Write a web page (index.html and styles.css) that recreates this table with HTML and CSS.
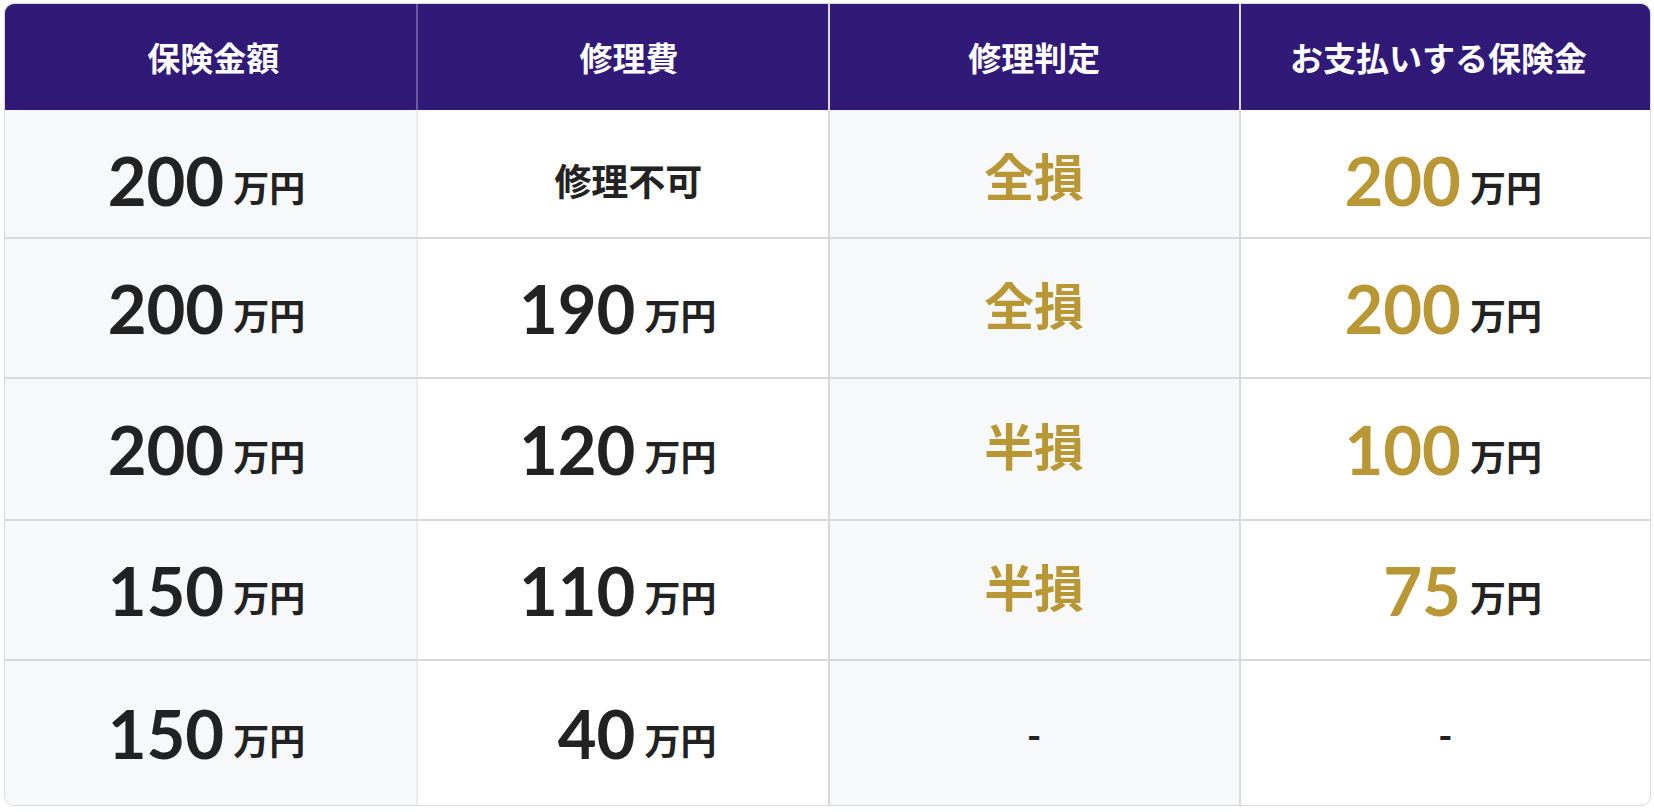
FILE: index.html
```html
<!DOCTYPE html>
<html lang="ja">
<head>
<meta charset="utf-8">
<title>保険金額表</title>
<link rel="stylesheet" href="styles.css">
</head>
<body>
<div class="table">
  <div class="row head">
    <div class="cell th th-1">保険金額</div>
    <div class="cell th th-2">修理費</div>
    <div class="cell th th-3">修理判定</div>
    <div class="cell th th-4">お支払いする保険金</div>
  </div>
  <div class="row r1">
    <div class="cell amt"><span class="val"><span class="num">200</span><span class="unit">万円</span></span></div>
    <div class="cell mid"><span class="label">修理不可</span></div>
    <div class="cell mid"><span class="judge">全損</span></div>
    <div class="cell amt"><span class="val"><span class="num gold">200</span><span class="unit">万円</span></span></div>
  </div>
  <div class="row r2">
    <div class="cell amt"><span class="val"><span class="num">200</span><span class="unit">万円</span></span></div>
    <div class="cell amt"><span class="val"><span class="num">190</span><span class="unit">万円</span></span></div>
    <div class="cell mid"><span class="judge">全損</span></div>
    <div class="cell amt"><span class="val"><span class="num gold">200</span><span class="unit">万円</span></span></div>
  </div>
  <div class="row r3">
    <div class="cell amt"><span class="val"><span class="num">200</span><span class="unit">万円</span></span></div>
    <div class="cell amt"><span class="val"><span class="num">120</span><span class="unit">万円</span></span></div>
    <div class="cell mid"><span class="judge">半損</span></div>
    <div class="cell amt"><span class="val"><span class="num gold">100</span><span class="unit">万円</span></span></div>
  </div>
  <div class="row r4">
    <div class="cell amt"><span class="val"><span class="num">150</span><span class="unit">万円</span></span></div>
    <div class="cell amt"><span class="val"><span class="num">110</span><span class="unit">万円</span></span></div>
    <div class="cell mid"><span class="judge">半損</span></div>
    <div class="cell amt"><span class="val"><span class="num gold">75</span><span class="unit">万円</span></span></div>
  </div>
  <div class="row r5">
    <div class="cell amt"><span class="val"><span class="num">150</span><span class="unit">万円</span></span></div>
    <div class="cell amt"><span class="val"><span class="num">40</span><span class="unit">万円</span></span></div>
    <div class="cell mid"><span class="dash">-</span></div>
    <div class="cell mid"><span class="dash">-</span></div>
  </div>
</div>
</body>
</html>
```

FILE: styles.css
```css
* {
  box-sizing: border-box;
}

html, body {
  margin: 0;
  padding: 0;
  background: #ffffff;
}

body {
  padding: 3px 3px 0 4px;
  font-family: "Noto Sans CJK JP", "Noto Sans", sans-serif;
  color: #222222;
}

.table {
  border: 1px solid #d9d9dd;
  border-radius: 10px;
  overflow: hidden;
  background: #ffffff;
}

.row {
  display: grid;
  grid-template-columns: repeat(4, 1fr);
}

.head {
  height: 106px;
  background: #311a77;
}

.r1 { height: 127px; }
.r2 { height: 140px; border-top: 2px solid #d9d9dc; }
.r3 { height: 142px; border-top: 2px solid #d9d9dc; }
.r4 { height: 140px; border-top: 2px solid #d9d9dc; }
.r5 { height: 146px; border-top: 2px solid #d9d9dc; }

.r1 .cell {
  padding-top: 12px;
}

.cell {
  display: flex;
  align-items: center;
  justify-content: center;
  min-width: 0;
}

.cell + .cell {
  border-left: 2px solid #d9d9dc;
}

.row:not(.head) .cell:nth-child(2) {
  border-left-color: #ececef;
}

.row:not(.head) .cell:nth-child(odd) {
  background: #f7f8fa;
}

.head .cell:nth-child(2) {
  border-left-color: rgba(255, 255, 255, 0.28);
}

.th {
  color: #ffffff;
  font-weight: 700;
  font-size: 33px;
  font-family: "Noto Sans CJK JP", "Noto Sans", sans-serif;
  white-space: nowrap;
}

.th-1 { padding-left: 5px; }
.th-2 { padding-left: 12px; }
.th-4 { padding-right: 14px; }

.amt {
  justify-content: flex-end;
  padding-right: 111px;
}

.amt:nth-child(4) {
  padding-right: 108px;
}

.val {
  display: block;
  white-space: nowrap;
  font-family: "Lato", "Liberation Sans", sans-serif;
  font-weight: 700;
  font-size: 67px;
}

.num {
  font-family: "Lato", "Liberation Sans", sans-serif;
  font-weight: 700;
  font-size: 67px;
  color: #222222;
}

.num.gold {
  color: #b99734;
}

.unit {
  font-family: "Noto Sans CJK JP", "Noto Sans", sans-serif;
  font-weight: 700;
  font-size: 36px;
  color: #222222;
  margin-left: 9px;
  vertical-align: 4px;
}

.label {
  font-family: "Noto Sans CJK JP", "Noto Sans", sans-serif;
  font-weight: 700;
  font-size: 37px;
  color: #222222;
  margin-left: 11px;
}

.judge {
  font-family: "Noto Sans CJK JP", "Noto Sans", sans-serif;
  font-weight: 700;
  font-size: 50px;
  color: #b99734;
  margin-bottom: 11px;
}

.dash {
  font-family: "Noto Sans CJK JP", "Noto Sans", sans-serif;
  font-weight: 700;
  font-size: 37px;
  color: #222222;
}
```
